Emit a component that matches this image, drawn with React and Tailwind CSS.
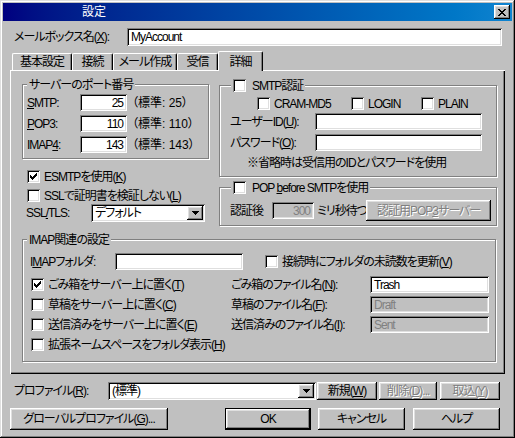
import React from "react";

const sunken =
  "shadow-[inset_1px_1px_0_#808080,inset_-1px_-1px_0_#ffffff,inset_2px_2px_0_#000000,inset_-2px_-2px_0_#dfdfdf]";
const raised =
  "shadow-[inset_-1px_-1px_0_#000000,inset_1px_1px_0_#ffffff,inset_-2px_-2px_0_#808080,inset_2px_2px_0_#dfdfdf]";
const etched = "border border-[#808080] shadow-[1px_1px_0_#ffffff,inset_1px_1px_0_#ffffff]";
const grayText = "text-[#808080] [text-shadow:1px_1px_0_#ffffff]";

const Check = ({ checked }) => (
  <span className={`flex h-[13px] w-[13px] shrink-0 items-center justify-center bg-white ${sunken}`}>
    {checked && (
      <svg width="7" height="7" viewBox="0 0 7 7" shapeRendering="crispEdges">
        <path
          d="M6 0h1v1h-1z M5 1h2v1h-2z M0 2h1v1h-1z M4 2h3v1h-3z M0 3h2v1h-2z M3 3h3v1h-3z M0 4h5v1h-5z M1 5h3v1h-3z M2 6h1v1h-1z"
          fill="#000"
        />
      </svg>
    )}
  </span>
);

const CheckRow = ({ checked, children, className = "" }) => (
  <div className={`flex h-[13px] items-center gap-[4px] ${className}`}>
    <Check checked={checked} />
    <span className="whitespace-nowrap">{children}</span>
  </div>
);

const Field = ({ className = "", disabled, right, children }) => (
  <div
    className={`flex h-[17px] items-center whitespace-nowrap ${right ? "justify-end pr-[4px]" : "pl-[4px]"} ${
      disabled ? "bg-[#c0c0c0] text-[#808080]" : "bg-white"
    } ${sunken} ${className}`}
  >
    {children}
  </div>
);

const Arrow = () => (
  <svg width="7" height="4" viewBox="0 0 7 4" shapeRendering="crispEdges">
    <path d="M0 0h7v1h-1v1h-1v1h-1v1h-1v-1h-1v-1h-1v-1h-1z" fill="#000" />
  </svg>
);

const Combo = ({ className = "", children }) => (
  <div className={`flex h-[18px] items-center bg-white p-[2px] ${sunken} ${className}`}>
    <span className="flex-1 pl-[2px] whitespace-nowrap">{children}</span>
    <span className={`flex h-[14px] w-[16px] items-center justify-center bg-[#c0c0c0] ${raised}`}>
      <Arrow />
    </span>
  </div>
);

const Button = ({ className = "", disabled, children }) => (
  <div
    className={`flex items-center justify-center whitespace-nowrap bg-[#c0c0c0] ${raised} ${
      disabled ? grayText : ""
    } ${className}`}
  >
    {children}
  </div>
);

const Tab = ({ w, active, children }) => (
  <div
    className={`${w} flex items-center justify-center rounded-t-[2px] border-t border-l border-r border-t-white border-l-white border-r-black bg-[#c0c0c0] shadow-[inset_-1px_0_0_#808080] ${
      active ? "relative z-10 -mb-[1px] h-[20px]" : "h-[17px]"
    }`}
  >
    {children}
  </div>
);

const GroupTitle = ({ className = "", children }) => (
  <div className={`-mt-[7px] flex h-[13px] w-fit items-center bg-[#c0c0c0] px-[2px] ${className}`}>
    {children}
  </div>
);

const PortRow = ({ label, value, std }) => (
  <div className="flex h-[17px] items-center">
    <span className="w-[53px]">{label}</span>
    <Field right className="w-[47px]">
      {value}
    </Field>
    <span className="ml-[5px] whitespace-nowrap tracking-normal">（標準: {std}）</span>
  </div>
);

const ImapRow = ({ checked, left, label, value, disabled }) => (
  <div className="flex h-[17px] items-center pl-[8px]">
    <CheckRow checked={checked} className="w-[200px]">
      {left}
    </CheckRow>
    {label && (
      <>
        <span className="w-[139px] whitespace-nowrap">{label}</span>
        <Field disabled={disabled} className="w-[119px]">
          {value}
        </Field>
      </>
    )}
  </div>
);

export default function App() {
  return (
    <div className="h-[438px] w-[515px] overflow-hidden bg-[#c0c0c0] p-[3px] font-['Liberation_Sans','Noto_Sans_CJK_JP',sans-serif] text-[12px] leading-[14px] tracking-[-1px] text-black [font-feature-settings:'palt'] shadow-[inset_-1px_-1px_0_#000000,inset_1px_1px_0_#dfdfdf,inset_-2px_-2px_0_#808080,inset_2px_2px_0_#ffffff]">
      {/* title bar */}
      <div className="flex h-[18px] items-center bg-linear-to-r from-[#000080] to-[#1084d0] pr-[2px] pl-[79px]">
        <span className="text-white tracking-normal">設定</span>
        <div className={`ml-auto flex h-[14px] w-[16px] items-center justify-center bg-[#c0c0c0] ${raised}`}>
          <svg width="8" height="7" viewBox="0 0 8 7" shapeRendering="crispEdges">
            <path
              d="M0 0h2v1h-2z M6 0h2v1h-2z M1 1h2v1h-2z M5 1h2v1h-2z M2 2h4v1h-4z M3 3h2v1h-2z M2 4h4v1h-4z M1 5h2v1h-2z M5 5h2v1h-2z M0 6h2v1h-2z M6 6h2v1h-2z"
              fill="#000"
            />
          </svg>
        </div>
      </div>

      {/* mailbox name */}
      <div className="mt-[7px] flex h-[18px] items-center pl-[11px]">
        <span className="w-[113px] whitespace-nowrap">
          メールボックス名(<u>X</u>):
        </span>
        <Field className="h-[18px] w-[375px]">MyAccount</Field>
      </div>

      {/* tabs */}
      <div className="mt-[5px] ml-[9px] flex h-[19px] items-end">
        <Tab w="w-[60px]">基本設定</Tab>
        <Tab w="w-[41px]">接続</Tab>
        <Tab w="w-[64px]">メール作成</Tab>
        <Tab w="w-[41px]">受信</Tab>
        <Tab w="w-[45px]" active>
          詳細
        </Tab>
      </div>

      {/* tab panel */}
      <div className="ml-[7px] h-[304px] w-[495px] pt-[14px] pl-[12px] shadow-[inset_1px_1px_0_#ffffff,inset_-1px_-1px_0_#000000,inset_-2px_-2px_0_#808080]">
        <div className="flex gap-[10px]">
          {/* left column */}
          <div className="w-[187px]">
            <div className={`${etched} pb-[5px]`}>
              <GroupTitle className="ml-[4px]">サーバーのポート番号</GroupTitle>
              <div className="mt-[3px] flex flex-col gap-[4px] pl-[4px]">
                <PortRow label={<><u>S</u>MTP:</>} value="25" std="25" />
                <PortRow label={<><u>P</u>OP3:</>} value="110" std="110" />
                <PortRow label={<>IMAP<u>4</u>:</>} value="143" std="143" />
              </div>
            </div>
            <CheckRow checked className="mt-[11px] pl-[5px]">
              ESMTPを使用(<u>K</u>)
            </CheckRow>
            <CheckRow className="mt-[6px] pl-[5px]">
              SSLで証明書を検証しない(<u>L</u>)
            </CheckRow>
            <div className="mt-[2px] flex items-center pl-[4px]">
              <span className="w-[65px]">
                SSL<u>/</u>TLS:
              </span>
              <Combo className="w-[114px]">デフォルト</Combo>
            </div>
          </div>

          {/* right column */}
          <div className="w-[278px]">
            <div className={`${etched} mt-[1px] pb-[7px]`}>
              <GroupTitle className="ml-[11px] gap-[6px]">
                <Check />
                SMTP認証
              </GroupTitle>
              <div className="mt-[5px] flex h-[13px] items-center pl-[37px]">
                <CheckRow className="w-[94px]">CRAM-MD5</CheckRow>
                <CheckRow className="w-[69px]">LOGIN</CheckRow>
                <CheckRow className="ml-[1px]">PLAIN</CheckRow>
              </div>
              <div className="mt-[3px] flex h-[17px] items-center pl-[10px]">
                <span className="w-[85px] whitespace-nowrap">
                  ユーザーID(<u>U</u>):
                </span>
                <Field className="w-[167px]" />
              </div>
              <div className="mt-[4px] flex h-[17px] items-center pl-[10px]">
                <span className="w-[85px] whitespace-nowrap">
                  パスワード(<u>O</u>):
                </span>
                <Field className="w-[167px]" />
              </div>
              <div className="mt-[5px] flex h-[13px] items-center pl-[27px] whitespace-nowrap">
                ※省略時は受信用のIDとパスワードを使用
              </div>
            </div>

            <div className={`${etched} mt-[10px] pb-[4px]`}>
              <GroupTitle className="ml-[11px] gap-[6px]">
                <Check />
                <span>
                  POP <u>b</u>efore SMTPを使用
                </span>
              </GroupTitle>
              <div className="mt-[6px] flex h-[21px] items-center pl-[10px]">
                <span className="w-[42px]">認証後</span>
                <Field disabled right className="w-[42px]">
                  300
                </Field>
                <span className="ml-[3px] w-[49px] whitespace-nowrap">ミリ秒待つ</span>
                <Button disabled className="h-[21px] w-[125px]">
                  認証用POP<u>3</u>サーバー
                </Button>
              </div>
            </div>
          </div>
        </div>

        {/* IMAP group */}
        <div className={`${etched} mt-[13px] w-[474px] pb-[8px]`}>
          <GroupTitle className="ml-[4px]">IMAP関連の設定</GroupTitle>
          <div className="mt-[7px] flex h-[17px] items-center pl-[7px]">
            <span className="w-[85px] whitespace-nowrap">
              I<u>M</u>APフォルダ:
            </span>
            <Field className="w-[128px]" />
            <CheckRow className="ml-[22px]">
              接続時にフォルダの未読数を更新(<u>V</u>)
            </CheckRow>
          </div>
          <div className="mt-[6px] flex flex-col gap-[3px]">
            <ImapRow
              checked
              left={<>ごみ箱をサーバー上に置く(<u>T</u>)</>}
              label={<>ごみ箱のファイル名(<u>N</u>):</>}
              value="Trash"
            />
            <ImapRow
              left={<>草稿をサーバー上に置く(<u>C</u>)</>}
              label={<>草稿のファイル名(<u>F</u>):</>}
              value="Draft"
              disabled
            />
            <ImapRow
              left={<>送信済みをサーバー上に置く(<u>E</u>)</>}
              label={<>送信済みのファイル名(<u>I</u>):</>}
              value="Sent"
              disabled
            />
            <ImapRow left={<>拡張ネームスペースをフォルダ表示(<u>H</u>)</>} />
          </div>
        </div>
      </div>

      {/* profile row */}
      <div className="mt-[8px] flex h-[18px] items-center pl-[11px]">
        <span className="w-[94px] whitespace-nowrap">
          プロファイル(<u>R</u>):
        </span>
        <Combo className="w-[208px]">(標準)</Combo>
        <Button className="ml-[1px] h-[18px] w-[60px]">
          新規(<u>W</u>)
        </Button>
        <Button disabled className="ml-[2px] h-[18px] w-[58px]">
          削除(<u>D</u>)...
        </Button>
        <Button disabled className="ml-[3px] h-[18px] w-[60px]">
          取込(<u>Y</u>)
        </Button>
      </div>

      {/* dialog buttons */}
      <div className="mt-[8px] flex h-[22px] items-center pl-[7px]">
        <Button className="h-[22px] w-[158px]">
          グローバルプロファイル(<u>G</u>)...
        </Button>
        <div className="ml-[57px] h-[22px] w-[86px] border border-black">
          <Button className="h-full w-full">OK</Button>
        </div>
        <Button className="ml-[7px] h-[22px] w-[87px]">キャンセル</Button>
        <Button className="ml-[8px] h-[22px] w-[87px]">ヘルプ</Button>
      </div>
    </div>
  );
}
